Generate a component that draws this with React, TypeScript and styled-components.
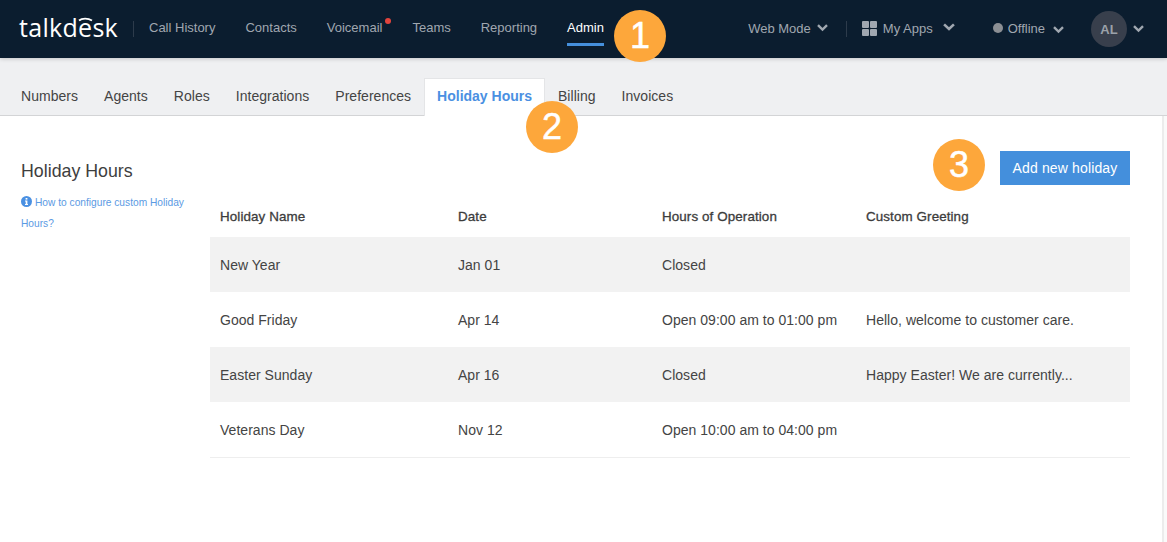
/* import */
import React from "react";
import styled, { createGlobalStyle } from "styled-components";

/* data */
const navItems = ["Call History", "Contacts", "Voicemail", "Teams", "Reporting", "Admin"];
const tabs = ["Numbers", "Agents", "Roles", "Integrations", "Preferences", "Holiday Hours", "Billing", "Invoices"];
const holidays = [
  { name: "New Year", date: "Jan 01", hours: "Closed", greeting: "" },
  { name: "Good Friday", date: "Apr 14", hours: "Open 09:00 am to 01:00 pm", greeting: "Hello, welcome to customer care." },
  { name: "Easter Sunday", date: "Apr 16", hours: "Closed", greeting: "Happy Easter! We are currently..." },
  { name: "Veterans Day", date: "Nov 12", hours: "Open 10:00 am to 04:00 pm", greeting: "" },
];

/* styled */
const GlobalStyle = createGlobalStyle`
  html, body {
    margin: 0;
    background: #fff;
    font-family: "Liberation Sans", Arial, sans-serif;
    overflow: hidden;
  }
  * { box-sizing: border-box; }
`;

const Page = styled.div`
  position: relative;
  width: 1167px;
  height: 542px;
  overflow: hidden;
`;

const TopBar = styled.header`
  position: relative;
  z-index: 1;
  display: flex;
  align-items: center;
  height: 58px;
  padding-left: 19px;
  background: #0b1d2f;
  box-shadow: 0 1px 4px rgba(0, 0, 0, 0.18);
`;

const Logo = styled.div`
  width: 99px;
  color: #fff;
  font-family: "Open Sans", sans-serif;
  font-size: 25px;
  font-weight: 500;
  line-height: 30px;
  letter-spacing: 0.3px;
  margin-top: -5px;
  white-space: nowrap;
`;

const LogoE = styled.span`
  position: relative;
  display: inline-block;
  svg {
    position: absolute;
    left: 0;
    top: 3px;
  }
`;

const Divider = styled.span<{ $ml: number; $mr: number }>`
  width: 1px;
  height: 16px;
  margin: 0 ${(p) => p.$mr}px 0 ${(p) => p.$ml}px;
  background: #2d3b4b;
`;

const Nav = styled.nav`
  display: flex;
  gap: 30px;
`;

const NavItem = styled.a<{ $active?: boolean; $dot?: boolean }>`
  position: relative;
  display: block;
  padding-bottom: 6px;
  font-size: 13px;
  line-height: 18px;
  margin-top: 7px;
  color: ${(p) => (p.$active ? "#fff" : "#a0a7b0")};
  border-bottom: 3px solid ${(p) => (p.$active ? "#4590dd" : "transparent")};
  white-space: nowrap;
  ${(p) =>
    p.$dot &&
    `&::after {
      content: "";
      position: absolute;
      top: -1px;
      right: -9px;
      width: 6px;
      height: 6px;
      border-radius: 50%;
      background: #e2443d;
    }`}
`;

const RightTools = styled.div`
  display: flex;
  align-items: center;
  margin-left: auto;
  padding-right: 23px;
  color: #a0a7b0;
  font-size: 13px;
`;

const Tool = styled.span<{ $gap: number; $ml?: number; $shift?: number }>`
  display: flex;
  align-items: center;
  gap: ${(p) => p.$gap}px;
  margin-left: ${(p) => p.$ml || 0}px;
  margin-top: ${(p) => p.$shift || 0}px;
  white-space: nowrap;
`;

const StatusDot = styled.span`
  width: 10px;
  height: 10px;
  border-radius: 50%;
  background: #8c8f94;
`;

const Avatar = styled.span`
  display: flex;
  align-items: center;
  justify-content: center;
  width: 36px;
  height: 36px;
  border-radius: 50%;
  background: #383f4c;
  color: #9ba1a9;
  font-size: 13px;
  font-weight: bold;
`;

const SubNav = styled.div`
  display: flex;
  align-items: flex-end;
  height: 58px;
  padding-left: 8px;
  background: #eff0f2;
  border-bottom: 1px solid #d3d4d6;
`;

const Tab = styled.a<{ $active?: boolean }>`
  height: 38px;
  margin-bottom: -1px;
  padding: 8px 12px 0;
  font-size: 14px;
  letter-spacing: ${(p) => (p.$active ? "0" : "0.03px")};
  line-height: 18px;
  font-weight: ${(p) => (p.$active ? "bold" : "normal")};
  color: ${(p) => (p.$active ? "#4a90e2" : "#444")};
  background: ${(p) => (p.$active ? "#fff" : "transparent")};
  border: 1px solid ${(p) => (p.$active ? "#e4e5e7" : "transparent")};
  border-bottom: none;
  white-space: nowrap;
`;

const Content = styled.main`
  display: flex;
  height: 426px;
`;

const Sidebar = styled.aside`
  width: 210px;
  padding: 44px 24px 0 21px;
`;

const Title = styled.h1`
  margin: 0 0 10px;
  font-size: 17.8px;
  line-height: 22px;
  font-weight: normal;
  color: #3e3e3e;
`;

const HelpLink = styled.a`
  display: block;
  font-size: 10.2px;
  line-height: 21px;
  color: #5b9ae3;
  svg {
    vertical-align: -1px;
    margin-right: 3px;
  }
`;

const Main = styled.section`
  width: 920px;
  padding-top: 35px;
`;

const ScrollTrack = styled.div`
  width: 5px;
  margin-left: auto;
  background: #fafafa;
  border-left: 2px solid #ececec;
`;

const Actions = styled.div`
  display: flex;
  justify-content: flex-end;
`;

const AddButton = styled.button`
  width: 130px;
  height: 34px;
  padding: 0;
  border: none;
  background: #448fdc;
  color: #fff;
  font-family: inherit;
  font-size: 14px;
  letter-spacing: 0.14px;
`;

const Row = styled.div<{ $head?: boolean; $shade?: boolean }>`
  display: grid;
  grid-template-columns: 238px 204px 204px 1fr;
  align-items: center;
  height: ${(p) => (p.$head ? "52px" : "55px")};
  padding: ${(p) => (p.$head ? "11px" : "0")} 0 0 10px;
  background: ${(p) => (p.$shade ? "#f2f2f2" : "#fff")};
  color: ${(p) => (p.$head ? "#3c3c3c" : "#444")};
  font-size: ${(p) => (p.$head ? "13.4px" : "14px")};
  letter-spacing: ${(p) => (p.$head ? "0.1px" : "0.03px")};
  -webkit-text-stroke: ${(p) => (p.$head ? "0.3px #3c3c3c" : "0")};
  &:last-child {
    height: 56px;
    border-bottom: 1px solid #eee;
  }
`;

const Badge = styled.span<{ $x: number; $y: number }>`
  position: absolute;
  left: ${(p) => p.$x - 26}px;
  top: ${(p) => p.$y - 26}px;
  z-index: 2;
  display: flex;
  align-items: center;
  justify-content: center;
  width: 52px;
  height: 52px;
  border-radius: 50%;
  background: #fda73b;
  color: #fff;
  font-size: 36px;
  line-height: 1;
  -webkit-text-stroke: 0.5px #fff;
`;

/* icons */
const Chevron: React.FC<{ size?: number }> = ({ size = 11 }) => (
  <svg width={size} height={size * 0.64} viewBox="0 0 11 7" fill="none">
    <path d="M1 1.2 5.500 5.500 10 1.200" stroke="#a0a7b0" strokeWidth="2.400" />
  </svg>
);

const AppsIcon: React.FC = () => (
  <svg width="15" height="15" viewBox="0 0 15 15" fill="#a0a7b0">
    <rect width="7" height="7" rx="1" />
    <rect x="8" width="7" height="7" rx="1" />
    <rect y="8" width="7" height="7" rx="1" />
    <rect x="8" y="8" width="7" height="7" rx="1" />
  </svg>
);

const InfoIcon: React.FC = () => (
  <svg width="11" height="11" viewBox="0 0 11 11">
    <circle cx="5.500" cy="5.500" r="5.500" fill="#4a90e2" />
    <rect x="4.600" y="2" width="1.800" height="1.600" fill="#fff" />
    <path d="M4 4.400h2.400v3.500H7v1H4v-1h.7V5.400H4z" fill="#fff" />
  </svg>
);

/* DOM */
const App: React.FC = (): JSX.Element => {
  return (
    <Page>
      <GlobalStyle />
      <TopBar>
        <Logo>
          talkd
          <LogoE>
            e
            <svg width="15" height="7" viewBox="0 0 15 7" fill="none">
              <path d="M1 5.500C4 3 10 3 14 5.500" stroke="#fff" strokeWidth="1.800" />
            </svg>
          </LogoE>
          sk
        </Logo>
        <Divider $ml={15} $mr={15} />
        <Nav>
          {navItems.map((item) => (
            <NavItem key={item} $active={item === "Admin"} $dot={item === "Voicemail"}>
              {item}
            </NavItem>
          ))}
        </Nav>
        <RightTools>
          <Tool $gap={6} $shift={-2}>
            Web Mode <Chevron />
          </Tool>
          <Divider $ml={18} $mr={15} />
          <Tool $gap={6} $shift={-2}>
            <AppsIcon /> My Apps
          </Tool>
          <Tool $gap={0} $ml={10} $shift={-4}>
            <Chevron size={12} />
          </Tool>
          <Tool $gap={5} $ml={38} $shift={-2}>
            <StatusDot /> Offline
          </Tool>
          <Tool $gap={0} $ml={8} $shift={2}>
            <Chevron />
          </Tool>
          <Tool $gap={6} $ml={27}>
            <Avatar>AL</Avatar> <Chevron />
          </Tool>
        </RightTools>
      </TopBar>
      <SubNav>
        {tabs.map((tab) => (
          <Tab key={tab} $active={tab === "Holiday Hours"}>
            {tab}
          </Tab>
        ))}
      </SubNav>
      <Content>
        <Sidebar>
          <Title>Holiday Hours</Title>
          <HelpLink>
            <InfoIcon />
            How to configure custom Holiday Hours?
          </HelpLink>
        </Sidebar>
        <Main>
          <Actions>
            <AddButton>Add new holiday</AddButton>
          </Actions>
          <Row $head>
            <span>Holiday Name</span>
            <span>Date</span>
            <span>Hours of Operation</span>
            <span>Custom Greeting</span>
          </Row>
          {holidays.map((h, i) => (
            <Row key={h.name} $shade={i % 2 === 0}>
              <span>{h.name}</span>
              <span>{h.date}</span>
              <span>{h.hours}</span>
              <span>{h.greeting}</span>
            </Row>
          ))}
        </Main>
        <ScrollTrack />
      </Content>
      <Badge $x={640} $y={36}>1</Badge>
      <Badge $x={552} $y={127}>2</Badge>
      <Badge $x={959} $y={165}>3</Badge>
    </Page>
  );
};

export default App;
